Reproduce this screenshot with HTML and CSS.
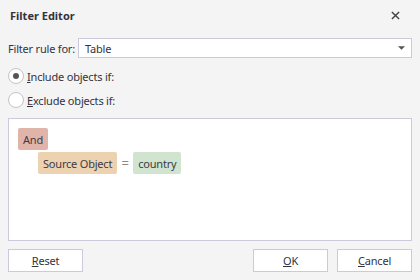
FILE: index.html
```html
<!DOCTYPE html>
<html lang="en">
<head>
    <meta charset="UTF-8">
    <title>Filter Editor</title>
    <link rel="stylesheet" href="styles.css">
</head>
<body>
    <div class="dialog">
        <div class="header">
            <span class="title">Filter Editor</span>
            <svg class="close" viewBox="0 0 10 10">
                <path d="M1 1 L9 9 M9 1 L1 9" />
            </svg>
        </div>

        <div class="rule-row">
            <label class="rule-label">Filter rule for:</label>
            <div class="combo">
                <span>Table</span>
                <svg class="arrow" viewBox="0 0 8 4"><path d="M0 0 H8 L4 4 Z" /></svg>
            </div>
        </div>

        <div class="radio-row">
            <span class="radio checked"></span>
            <span><u>I</u>nclude objects if:</span>
        </div>
        <div class="radio-row">
            <span class="radio"></span>
            <span><u>E</u>xclude objects if:</span>
        </div>

        <div class="filter-box">
            <div class="node-row">
                <span class="tag tag-group">And</span>
            </div>
            <div class="node-row indent">
                <span class="tag tag-field">Source Object</span>
                <span class="op">=</span>
                <span class="tag tag-value">country</span>
            </div>
        </div>

        <div class="buttons">
            <button><u>R</u>eset</button>
            <span class="spacer"></span>
            <button><u>O</u>K</button>
            <button><u>C</u>ancel</button>
        </div>
    </div>
</body>
</html>
```

FILE: styles.css
```css
body {
    margin: 0;
    background-color: #f4f4f4;
    font-family: "Noto Sans", "Open Sans", sans-serif;
    font-size: 11px;
    letter-spacing: -0.2px;
    color: #33333d;
}
.dialog {
    width: 420px;
    height: 280px;
    display: flex;
    flex-direction: column;
    padding: 0 8px;
    box-sizing: border-box;
}
.header {
    height: 30px;
    display: flex;
    align-items: center;
    justify-content: space-between;
    padding: 0 12px 0 2px;
}
.title {
    font-weight: bold;
    font-size: 11px;
    letter-spacing: 0;
}
.close {
    width: 9px;
    height: 9px;
    stroke: #444;
    stroke-width: 1.6;
}
.rule-row {
    margin-top: 8px;
    display: flex;
    align-items: center;
    height: 20px;
}
.rule-label {
    width: 70px;
    white-space: nowrap;
}
.combo {
    flex: 1;
    height: 20px;
    box-sizing: border-box;
    border: 1px solid #cacadc;
    background-color: #fff;
    display: flex;
    align-items: center;
    justify-content: space-between;
    padding: 0 6px 0 6px;
}
.arrow {
    width: 7px;
    height: 4px;
    fill: #555;
}
.radio-row {
    height: 24px;
    display: flex;
    align-items: center;
    gap: 3px;
}
.rule-row + .radio-row {
    margin-top: 6px;
}
.radio {
    width: 16px;
    height: 16px;
    box-sizing: border-box;
    border: 1px solid #c4c4c4;
    border-radius: 50%;
    background-color: #fff;
    display: flex;
    align-items: center;
    justify-content: center;
}
.radio.checked::after {
    content: "";
    width: 6px;
    height: 6px;
    border-radius: 50%;
    background-color: #555;
}
.filter-box {
    margin-top: 6px;
    height: 123px;
    box-sizing: border-box;
    border: 1px solid #cacadc;
    background-color: #fff;
    padding: 9px;
    display: flex;
    flex-direction: column;
    gap: 2px;
}
.node-row {
    display: flex;
    align-items: center;
}
.indent {
    padding-left: 20px;
}
.tag {
    height: 22px;
    display: flex;
    align-items: center;
    padding: 0 5px;
    border-radius: 2px;
    color: #3c3c46;
}
.tag-group {
    background-color: #e1b4a9;
}
.tag-field {
    background-color: #ecd2b0;
}
.tag-value {
    background-color: #d0e4d0;
}
.op {
    width: 16px;
    text-align: center;
    color: #888;
    font-size: 13px;
}
.buttons {
    margin-top: 8px;
    display: flex;
    gap: 9px;
}
.spacer {
    flex: 1;
}
button {
    width: 75px;
    height: 23px;
    border: 1px solid #cacadc;
    background-color: #fff;
    font-family: inherit;
    font-size: 11px;
    letter-spacing: inherit;
    color: #33333d;
    padding: 0;
}
```
